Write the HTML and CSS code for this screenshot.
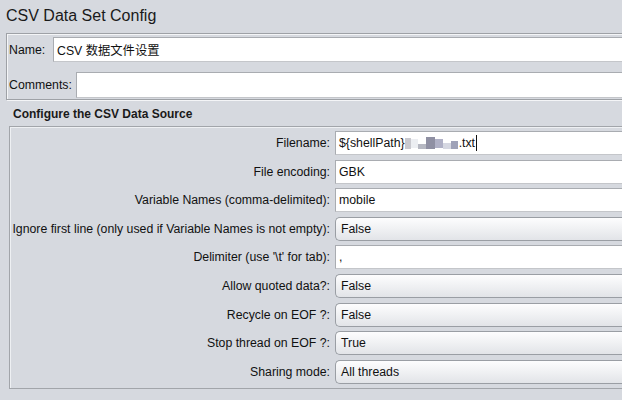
FILE: index.html
```html
<!DOCTYPE html>
<html>
<head>
<meta charset="utf-8">
<link rel="stylesheet" href="styles.css">
</head>
<body>
<div class="page">
  <div class="title">CSV Data Set Config</div>
  <div class="name-panel">
    <div class="nrow">
      <span class="nlabel">Name:</span>
      <div class="tf name-tf">CSV 数据文件设置</div>
    </div>
    <div class="nrow crow">
      <span class="nlabel">Comments:</span>
      <div class="tf comm-tf"></div>
    </div>
  </div>
  <div class="section-title">Configure the CSV Data Source</div>
  <div class="box">
    <div class="lbl">Filename:</div>
    <div class="tf">${shellPath}<span class="blur"><i class="b1"></i><i class="b2"></i><i class="b3"></i><i class="b4"></i><i class="b5"></i><i class="b6"></i><i class="b7"></i></span>.txt<span class="caret"></span></div>
    <div class="lbl">File encoding:</div>
    <div class="tf">GBK</div>
    <div class="lbl">Variable Names (comma-delimited):</div>
    <div class="tf">mobile</div>
    <div class="lbl">Ignore first line (only used if Variable Names is not empty):</div>
    <div class="combo">False</div>
    <div class="lbl">Delimiter (use '\t' for tab):</div>
    <div class="tf">,</div>
    <div class="lbl">Allow quoted data?:</div>
    <div class="combo">False</div>
    <div class="lbl">Recycle on EOF ?:</div>
    <div class="combo">False</div>
    <div class="lbl">Stop thread on EOF ?:</div>
    <div class="combo">True</div>
    <div class="lbl">Sharing mode:</div>
    <div class="combo">All threads</div>
  </div>
</div>
</body>
</html>
```
FILE: styles.css
```css
html, body {
  margin: 0;
  padding: 0;
}
body {
  width: 622px;
  height: 400px;
  overflow: hidden;
  background: #d6d9df;
  font-family: "Liberation Sans", Arial, "Noto Sans CJK SC", sans-serif;
  font-size: 12.3px;
  color: #111;
}
.page {
  width: 660px;
}
.title {
  height: 33px;
  padding: 6px 0 0 6px;
  box-sizing: border-box;
  font-size: 16px;
  line-height: 20px;
  color: #1a1a1a;
}
.name-panel {
  margin-left: 6px;
  border: 1px solid #9ea1a6;
  box-shadow: inset 1px 1px 0 #f4f5f7, 1px 1px 0 #f4f5f7;
  padding: 3px 0 1px 1px;
  display: flex;
  flex-direction: column;
}
.nrow {
  display: flex;
  align-items: center;
  height: 25px;
}
.crow {
  margin-top: 10px;
  height: 26px;
}
.nlabel {
  padding-left: 1px;
  width: 44px;
  flex: none;
}
.crow .nlabel {
  width: 67px;
}
.tf {
  background: #fff;
  border: 1px solid #a9acb1;
  border-bottom-color: #c4c6ca;
  box-sizing: border-box;
  height: 100%;
  display: flex;
  align-items: center;
  padding-left: 3px;
  white-space: nowrap;
}
.name-tf {
  flex: 1;
}
.comm-tf {
  flex: 1;
}
.section-title {
  height: 26px;
  padding-left: 13px;
  box-sizing: border-box;
  font-weight: bold;
  font-size: 12px;
  line-height: 28px;
  color: #1a1a1a;
}
.box {
  margin-left: 9px;
  border: 1px solid #a2a5aa;
  box-shadow: inset 1px 1px 0 #eef0f3;
  padding: 4px 0 4px 0;
  display: grid;
  grid-template-columns: 320px 1fr;
  grid-auto-rows: 24px;
  column-gap: 5px;
  row-gap: 4.6px;
}
.lbl {
  text-align: right;
  line-height: 24px;
  white-space: nowrap;
}
.combo {
  box-sizing: border-box;
  height: 24px;
  border: 1px solid #9a9ea4;
  border-right: none;
  border-radius: 5px 0 0 5px;
  background: linear-gradient(#fdfdfe 0%, #f1f2f4 45%, #e2e4e8 100%);
  padding-left: 5px;
  line-height: 22px;
}
.blur {
  display: inline-flex;
  align-items: center;
  height: 14px;
  margin: 0 1px 0 0;
}
.blur i {
  display: inline-block;
  height: 9px;
}
.blur .b1 { width: 6px; background: #c9c9cf; height: 11px; }
.blur .b2 { width: 7px; background: #eceef2; }
.blur .b3 { width: 8px; background: #b6b8c2; height: 5px; margin-top: 6px; }
.blur .b4 { width: 9px; background: #8f90a3; height: 12px; }
.blur .b5 { width: 8px; background: #b0b1c6; }
.blur .b6 { width: 8px; background: #d6d8e2; height: 6px; margin-top: 5px; }
.blur .b7 { width: 7px; background: #9fa2b8; height: 8px; margin-top: 4px; }
.caret {
  display: inline-block;
  width: 1px;
  height: 16px;
  background: #111;
  margin-left: 1px;
}
```
